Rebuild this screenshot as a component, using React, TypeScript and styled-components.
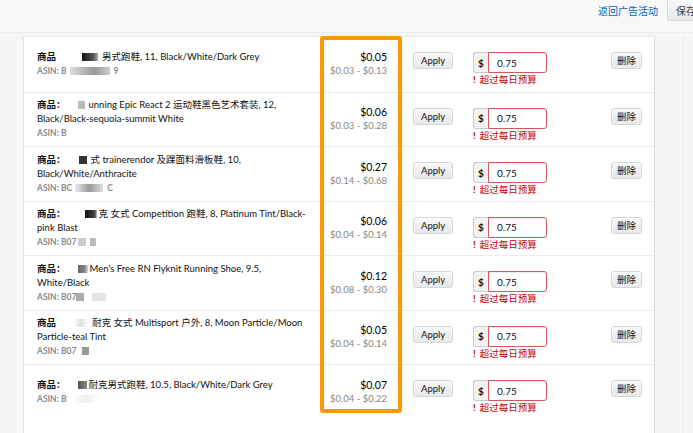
import React from 'react';
import styled, { createGlobalStyle } from 'styled-components';

const GlobalStyle = createGlobalStyle`
  html, body {
    margin: 0;
    padding: 0;
    background: #f5f5f5;
  }
  body {
    font-family: Lato, "Noto Sans CJK SC", sans-serif;
    color: #111;
  }
`;

const Page = styled.div`
  width: 693px;
  height: 433px;
  overflow: hidden;
  background: #f5f5f5;
`;

const TopBar = styled.div`
  height: 33px;
  display: flex;
  justify-content: flex-end;
  align-items: flex-start;
  gap: 9px;
  background: #f8f8f8;
  border-bottom: 1px solid #ececec;
  box-sizing: border-box;
`;

const BackLink = styled.a`
  margin-top: 5px;
  font-size: 10px;
  line-height: 12px;
  color: #0066c0;
  text-decoration: none;
  cursor: pointer;
`;

const SaveButton = styled.button`
  flex: none;
  width: 44px;
  height: 21px;
  margin-right: -18px;
  padding: 0 8px;
  text-align: left;
  white-space: nowrap;
  font-family: inherit;
  font-size: 10px;
  color: #444;
  background: linear-gradient(#f7f8fa, #e7e9ec);
  border: 1px solid #d5d9d9;
  border-top: none;
  border-radius: 0 0 3px 3px;
`;

const Body = styled.div`
  display: flex;
  padding: 3px 0 0 23px;
`;

const Panel = styled.div`
  position: relative;
  width: 632px;
  background: #fff;
  border: 1px solid #e6e6e6;
  border-right-color: #dcdcdc;
  box-sizing: border-box;
`;

const Gutter = styled.div`
  flex: 1;
  margin-left: 28px;
  height: 400px;
  border-left: 1px solid #e8e8e8;
`;

const Row = styled.div`
  height: 54.5px;
  box-sizing: border-box;
  display: grid;
  grid-template-columns: 270px 80px 86px 138px 1fr;
  padding-left: 13px;
  & + & {
    border-top: 1px solid #ececec;
  }
`;

const ProductCell = styled.div`
  display: flex;
  flex-direction: column;
  justify-content: center;
  overflow: hidden;
`;

const ProductLine = styled.div`
  font-size: 9.5px;
  line-height: 14px;
  color: #111;
  white-space: nowrap;
`;

const Label = styled.span`
  font-weight: 700;
`;

const Asin = styled.div`
  font-size: 8.5px;
  line-height: 14px;
  color: #8a8a8a;
  font-weight: 700;
`;

const Redact = styled.span<{ $w: number; $tone: string; $gap?: number; $after?: number }>`
  display: inline-block;
  width: ${({ $w }) => $w}px;
  height: 8px;
  margin-left: ${({ $gap }) => $gap ?? 0}px;
  margin-right: ${({ $after }) => $after ?? 4}px;
  vertical-align: -1px;
  background: ${({ $tone }) => $tone};
  filter: blur(0.6px);
`;

const PriceCell = styled.div`
  display: flex;
  flex-direction: column;
  justify-content: center;
  align-items: flex-end;
`;

const Price = styled.div`
  font-size: 10.5px;
  line-height: 14px;
  color: #000;
`;

const Range = styled.div`
  font-size: 9.5px;
  line-height: 14px;
  color: #888;
`;

const ActionCell = styled.div`
  padding-top: 15px;
  padding-left: 26px;
`;

const SmallButton = styled.button<{ $pad?: number }>`
  display: block;
  height: 17px;
  padding: 0 ${({ $pad }) => $pad ?? 7}px;
  font-family: inherit;
  font-size: 9.5px;
  line-height: 15px;
  color: #111;
  background: linear-gradient(#f7f8fa, #e7e9ec);
  border: 1px solid #d5d6d8;
  border-radius: 3px;
  box-shadow: 0 1px 0 rgba(255, 255, 255, 0.6) inset;
  cursor: pointer;
`;

const BidCell = styled.div`
  padding-top: 15px;
`;

const InputGroup = styled.div`
  display: flex;
  height: 21px;
`;

const Prefix = styled.span`
  width: 15px;
  box-sizing: border-box;
  display: flex;
  align-items: center;
  justify-content: center;
  font-size: 10px;
  font-weight: 700;
  background: #f3f3f3;
  border: 1px solid #ccc;
  border-right: none;
  border-radius: 3px 0 0 3px;
`;

const BidInput = styled.input`
  width: 59px;
  height: 21px;
  box-sizing: border-box;
  padding: 0 0 0 8px;
  font-family: inherit;
  font-size: 10px;
  color: #111;
  border: 1px solid #d0595b;
  border-radius: 0 3px 3px 0;
  box-shadow: 0 1px 1px rgba(0, 0, 0, 0.08) inset;
  outline: none;
`;

const ErrorText = styled.div`
  margin-top: 1px;
  font-size: 9.5px;
  line-height: 12px;
  color: #c40000;
  b {
    margin-right: 4px;
  }
`;

const DeleteCell = styled.div`
  padding-top: 15px;
`;

const Highlight = styled.div`
  position: absolute;
  left: 296px;
  top: -1px;
  width: 82px;
  height: 377px;
  box-sizing: border-box;
  border: 4px solid #ff9900;
  border-radius: 3px;
  pointer-events: none;
`;

type Item = {
  label: string;
  redact: React.ReactNode;
  lines: string[];
  asin: React.ReactNode;
  price: string;
  range: string;
};

const items: Item[] = [
  {
    label: '商品',
    redact: <Redact $w={16} $tone="linear-gradient(90deg,#111,#555 70%,#aaa)" $gap={26} />,
    lines: ['男式跑鞋, 11, Black/White/Dark Grey'],
    asin: <>B<Redact $w={40} $tone="linear-gradient(90deg,#ddd,#999 60%,#ccc)" $gap={3} />9</>,
    price: '$0.05',
    range: '$0.03 - $0.13',
  },
  {
    label: '商品：',
    redact: <Redact $w={7} $tone="#bbb" $gap={12} />,
    lines: ['unning Epic React 2 运动鞋黑色艺术套装, 12,', 'Black/Black-sequoia-summit White'],
    asin: <>B</>,
    price: '$0.06',
    range: '$0.03 - $0.28',
  },
  {
    label: '商品：',
    redact: <Redact $w={8} $tone="#333" $gap={13} />,
    lines: ['式 trainerendor 及踝面料滑板鞋, 10,', 'Black/White/Anthracite'],
    asin: <>BC<Redact $w={28} $tone="linear-gradient(90deg,#eee,#999 50%,#ddd)" $gap={3} />C</>,
    price: '$0.27',
    range: '$0.14 - $0.68',
  },
  {
    label: '商品：',
    redact: <Redact $w={12} $tone="linear-gradient(90deg,#111,#444 80%,#bbb)" $gap={19} $after={2} />,
    lines: ['克 女式 Competition 跑鞋, 8, Platinum Tint/Black-', 'pink Blast'],
    asin: <>B07<Redact $w={8} $tone="#ccc" $gap={2} /><Redact $w={6} $tone="#bbb" /></>,
    price: '$0.06',
    range: '$0.04 - $0.14',
  },
  {
    label: '商品：',
    redact: <Redact $w={10} $tone="linear-gradient(90deg,#666,#888 70%,#ddd)" $gap={12} $after={2} />,
    lines: ["Men's Free RN Flyknit Running Shoe, 9.5,", 'White/Black'],
    asin: <>B07<Redact $w={8} $tone="#aaa" $gap={0} /><Redact $w={14} $tone="#e4e4e4" $gap={4} /></>,
    price: '$0.12',
    range: '$0.08 - $0.30',
  },
  {
    label: '商品',
    redact: <Redact $w={14} $tone="linear-gradient(90deg,#fff,#ddd 50%,#fff)" $gap={18} />,
    lines: ['耐克 女式 Multisport 户外, 8, Moon Particle/Moon', 'Particle-teal Tint'],
    asin: <>B07<Redact $w={7} $tone="#999" $gap={6} /></>,
    price: '$0.05',
    range: '$0.04 - $0.14',
  },
  {
    label: '商品：',
    redact: <Redact $w={9} $tone="linear-gradient(90deg,#555,#888)" $gap={12} $after={2} />,
    lines: ['耐克男式跑鞋, 10.5, Black/White/Dark Grey'],
    asin: <>B<Redact $w={30} $tone="linear-gradient(90deg,#fff,#eee 50%,#fff)" $gap={4} /></>,
    price: '$0.07',
    range: '$0.04 - $0.22',
  },
];

export default function App() {
  return (
    <Page>
      <GlobalStyle />
      <TopBar>
        <BackLink>返回广告活动</BackLink>
        <SaveButton>保存...</SaveButton>
      </TopBar>
      <Body>
        <Panel>
          {items.map((item, idx) => (
            <Row key={idx}>
              <ProductCell>
                {item.lines.map((line, i) => (
                  <ProductLine key={i}>
                    {i === 0 && (
                      <>
                        <Label>{item.label}</Label>
                        {item.redact}
                      </>
                    )}
                    {line}
                  </ProductLine>
                ))}
                <Asin>ASIN: {item.asin}</Asin>
              </ProductCell>
              <PriceCell>
                <Price>{item.price}</Price>
                <Range>{item.range}</Range>
              </PriceCell>
              <ActionCell>
                <SmallButton>Apply</SmallButton>
              </ActionCell>
              <BidCell>
                <InputGroup>
                  <Prefix>$</Prefix>
                  <BidInput defaultValue="0.75" />
                </InputGroup>
                <ErrorText>
                  <b>!</b>超过每日预算
                </ErrorText>
              </BidCell>
              <DeleteCell>
                <SmallButton $pad={5}>删除</SmallButton>
              </DeleteCell>
            </Row>
          ))}
          <Highlight />
        </Panel>
        <Gutter />
      </Body>
    </Page>
  );
}
